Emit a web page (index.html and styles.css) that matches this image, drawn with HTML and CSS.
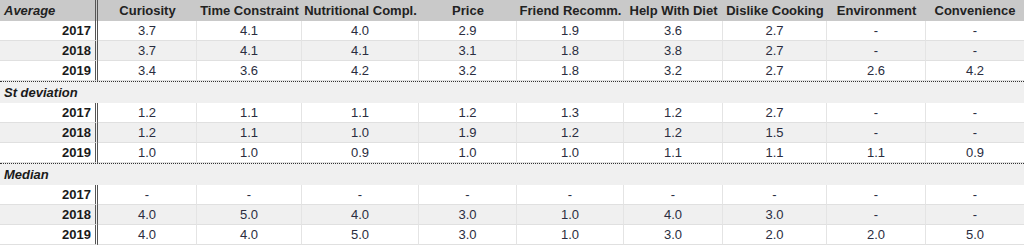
FILE: index.html
```html
<!DOCTYPE html>
<html lang="en">
<head>
    <meta charset="UTF-8">
    <meta name="viewport" content="width=device-width, initial-scale=1.0">
    <title>Reasons - Summary</title>
    <link rel="stylesheet" href="styles.css">
</head>
<body>
    <table class="stats">
        <thead>
            <tr>
                <th class="label w1">Average</th>
                <th class="w2">Curiosity</th>
                <th class="w3">Time Constraint</th>
                <th class="w4">Nutritional Compl.</th>
                <th class="w5">Price</th>
                <th class="w6">Friend Recomm.</th>
                <th class="w7">Help With Diet</th>
                <th class="w8">Dislike Cooking</th>
                <th class="w9">Environment</th>
                <th class="w10">Convenience</th>
            </tr>
        </thead>
        <tbody>
            <tr>
                <td class="year">2017</td>
                <td>3.7</td><td>4.1</td><td>4.0</td><td>2.9</td><td>1.9</td><td>3.6</td><td>2.7</td><td>-</td><td>-</td>
            </tr>
            <tr class="alt">
                <td class="year">2018</td>
                <td>3.7</td><td>4.1</td><td>4.1</td><td>3.1</td><td>1.8</td><td>3.8</td><td>2.7</td><td>-</td><td>-</td>
            </tr>
            <tr>
                <td class="year">2019</td>
                <td>3.4</td><td>3.6</td><td>4.2</td><td>3.2</td><td>1.8</td><td>3.2</td><td>2.7</td><td>2.6</td><td>4.2</td>
            </tr>

            <!-- desviacion -->
            <tr class="section">
                <td colspan="10">St deviation</td>
            </tr>
            <tr>
                <td class="year">2017</td>
                <td>1.2</td><td>1.1</td><td>1.1</td><td>1.2</td><td>1.3</td><td>1.2</td><td>2.7</td><td>-</td><td>-</td>
            </tr>
            <tr class="alt">
                <td class="year">2018</td>
                <td>1.2</td><td>1.1</td><td>1.0</td><td>1.9</td><td>1.2</td><td>1.2</td><td>1.5</td><td>-</td><td>-</td>
            </tr>
            <tr>
                <td class="year">2019</td>
                <td>1.0</td><td>1.0</td><td>0.9</td><td>1.0</td><td>1.0</td><td>1.1</td><td>1.1</td><td>1.1</td><td>0.9</td>
            </tr>

            <!-- mediana -->
            <tr class="section">
                <td colspan="10">Median</td>
            </tr>
            <tr>
                <td class="year">2017</td>
                <td>-</td><td>-</td><td>-</td><td>-</td><td>-</td><td>-</td><td>-</td><td>-</td><td>-</td>
            </tr>
            <tr class="alt">
                <td class="year">2018</td>
                <td>4.0</td><td>5.0</td><td>4.0</td><td>3.0</td><td>1.0</td><td>4.0</td><td>3.0</td><td>-</td><td>-</td>
            </tr>
            <tr>
                <td class="year">2019</td>
                <td>4.0</td><td>4.0</td><td>5.0</td><td>3.0</td><td>1.0</td><td>3.0</td><td>2.0</td><td>2.0</td><td>5.0</td>
            </tr>
        </tbody>
    </table>
</body>
</html>
```

FILE: styles.css
```css
* {
    margin: 0;
    padding: 0;
    box-sizing: border-box;
}

body {
    background-color: #fff;
    font-family: 'Liberation Sans', Arial, sans-serif;
    font-size: 13px;
    color: #222;
}

.stats {
    width: 1024px;
    table-layout: fixed;
    border-collapse: separate;
    border-spacing: 0;
}

/* anchos de columna */
.w1 { width: 98px; }
.w2 { width: 99px; }
.w3 { width: 105px; }
.w4 { width: 117px; }
.w5 { width: 98px; }
.w6 { width: 107px; }
.w7 { width: 99px; }
.w8 { width: 104px; }
.w9 { width: 99px; }
.w10 { width: 98px; }

thead th {
    background-color: #c9c9c9;
    color: #222;
    font-weight: bold;
    line-height: 20px;
    height: 21px;
    text-align: center;
    white-space: nowrap;
    overflow: hidden;
}

thead th.label {
    text-align: left;
    font-style: italic;
    padding-left: 4px;
    border-right: 3px double #555;
}

tbody td {
    line-height: 19px;
    height: 20px;
    text-align: center;
    color: #2a2d40;
    border-bottom: 1px solid #e0e0e0;
    border-right: 1px solid #e4e4e4;
    white-space: nowrap;
}

tbody td:last-child {
    border-right: none;
}

tbody td.year {
    text-align: right;
    font-weight: bold;
    color: #1a1a1a;
    padding-right: 4px;
    border-right: 3px double #555;
}

tbody tr.alt td {
    background-color: #f0f0f0;
}

tbody tr.section td {
    background-color: #f0f0f0;
    border-top: 1px dotted #333;
    border-bottom: none;
    border-right: none;
    height: 22px;
    line-height: 21px;
    text-align: left;
    padding-left: 4px;
    font-weight: bold;
    font-style: italic;
    color: #1a1a1a;
}
```
